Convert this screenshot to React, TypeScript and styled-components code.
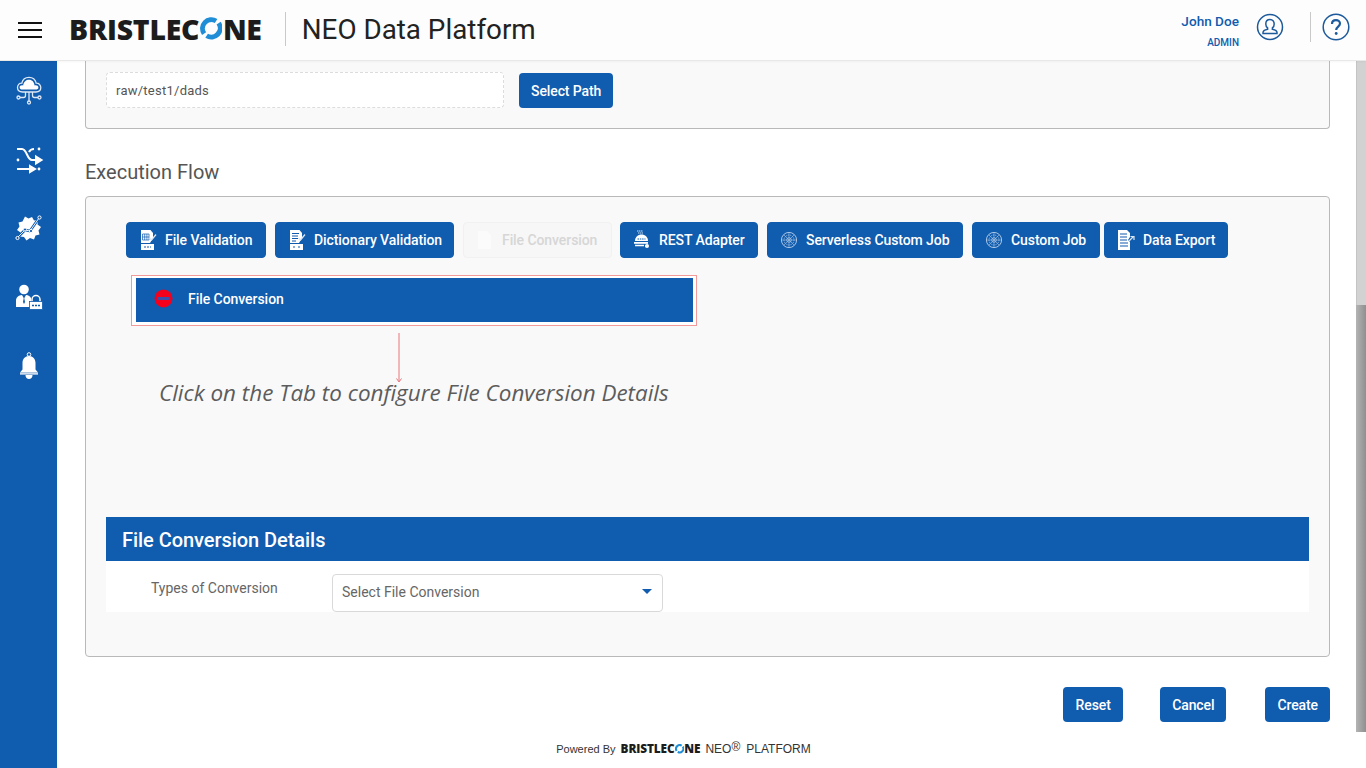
import React from 'react'
import styled, { createGlobalStyle } from 'styled-components'

const BLUE = '#105cae'

const GlobalStyle = createGlobalStyle`
  html, body {
    margin: 0;
    height: 100%;
    overflow: hidden;
    background: #fff;
    font-family: Roboto, "Liberation Sans", sans-serif;
  }
  * { box-sizing: border-box; }
`

const Page = styled.div`
  display: flex;
  flex-direction: column;
  width: 1366px;
  height: 768px;
`

const Header = styled.header`
  display: flex;
  align-items: center;
  flex: none;
  height: 61px;
  padding: 0 16px 6px 18px;
  background: #fdfdfd;
  border-bottom: 1px solid #e8e8e8;
  box-shadow: 0 1px 2px rgba(0, 0, 0, 0.04);
  z-index: 1;
`

const Burger = styled.div`
  display: flex;
  flex-direction: column;
  gap: 5px;
  width: 24px;
  margin: 6px 27px 0 0;
  span {
    height: 2px;
    background: #111;
  }
`

const HeaderLogo = styled.div`
  margin-top: 4px;
`

const LogoMark = styled.span<{ $size: number; $track: number }>`
  display: inline-flex;
  align-items: center;
  font-family: "Open Sans", sans-serif;
  font-weight: 800;
  font-size: ${(p) => p.$size}px;
  letter-spacing: ${(p) => p.$track}px;
  line-height: 1;
  color: #1c1c1c;
  svg {
    width: 0.8em;
    height: 0.8em;
    margin: 0 0.015em;
  }
`

const TitleGroup = styled.div`
  display: flex;
  align-items: center;
  height: 34px;
  margin: 4px 0 0 23px;
  padding-left: 16px;
  border-left: 1px solid #c9c9c9;
  font-size: 27.8px;
  color: #222;
`

const UserBlock = styled.div`
  margin-left: auto;
  margin-top: 6px;
  text-align: right;
  color: ${BLUE};
  font-weight: 500;
  strong {
    display: block;
    font-size: 13.6px;
    font-weight: 500;
    line-height: 20px;
  }
  small {
    display: block;
    margin-top: 6px;
    font-size: 10px;
    line-height: 12px;
  }
`

const UserIcon = styled.svg`
  width: 28px;
  height: 28px;
  margin: 0 26px 0 17px;
  flex: none;
`

const HelpGroup = styled.div`
  display: flex;
  align-items: center;
  height: 30px;
  padding-left: 11px;
  border-left: 1px solid #c9c9c9;
  svg {
    width: 28px;
    height: 28px;
  }
`

const Body = styled.div`
  display: flex;
  flex: 1;
  min-height: 0;
`

const Sidebar = styled.nav`
  display: flex;
  flex-direction: column;
  align-items: center;
  gap: 39px;
  flex: none;
  width: 57px;
  padding-top: 14px;
  background: ${BLUE};
  svg {
    width: 30px;
    height: 30px;
  }
`

const Main = styled.main`
  flex: 1;
  display: flex;
  flex-direction: column;
  padding: 0 26px 0 28px;
`

const PathPanel = styled.section`
  display: flex;
  align-items: flex-start;
  gap: 15px;
  height: 68px;
  padding: 11px 20px 0;
  background: #f9f9f9;
  border: 1px solid #b9b9b9;
  border-top: 0;
  border-radius: 0 0 4px 4px;
`

const PathInput = styled.div`
  display: flex;
  align-items: center;
  width: 398px;
  height: 36px;
  padding-left: 9px;
  background: #fff;
  border: 1px dashed #dcdcdc;
  border-radius: 4px;
  font-size: 13px;
  letter-spacing: 0.25px;
  color: #555;
`

const Action = styled.button`
  display: block;
  height: 35px;
  margin-top: 1px;
  padding: 0 12px;
  background: ${BLUE};
  border: 0;
  border-radius: 4px;
  font-family: inherit;
  font-size: 14px;
  font-weight: 500;
  letter-spacing: -0.1px;
  color: #fff;
`

const SectionTitle = styled.h2`
  margin: 30px 0 11px;
  font-size: 20px;
  font-weight: 400;
  line-height: 26px;
  color: #555;
`

const FlowPanel = styled.section`
  height: 461px;
  padding: 25px 20px 0;
  background: #f9f9f9;
  border: 1px solid #b9b9b9;
  border-radius: 4px;
`

const TabRow = styled.div`
  display: flex;
  padding-left: 20px;
`

const Tab = styled.div<{ $width: number; $gap: number; $off?: boolean }>`
  display: flex;
  align-items: center;
  gap: 8px;
  flex: none;
  width: ${(p) => p.$width}px;
  height: 36px;
  margin-right: ${(p) => p.$gap}px;
  padding-left: 12px;
  background: ${(p) => (p.$off ? '#f7f7f7' : BLUE)};
  border: 1px solid ${(p) => (p.$off ? '#f1f1f1' : BLUE)};
  border-radius: 4px;
  font-size: 14px;
  font-weight: 500;
  letter-spacing: -0.08px;
  color: ${(p) => (p.$off ? '#d6d6d6' : '#fff')};
  white-space: nowrap;
  svg {
    width: 18px;
    height: 20px;
    flex: none;
  }
`

const ActiveFrame = styled.div`
  width: 566px;
  height: 51px;
  margin: 17px 0 0 25px;
  padding: 2px 3px 3px 4px;
  background: #fff;
  border: 1px solid #f39a9a;
`

const ActiveTab = styled.div`
  display: flex;
  align-items: center;
  gap: 15px;
  height: 100%;
  padding: 0 0 3px 18px;
  background: ${BLUE};
  font-size: 14px;
  font-weight: 500;
  letter-spacing: -0.05px;
  color: #fff;
  svg {
    width: 19px;
    height: 19px;
  }
`

const Pointer = styled.svg`
  display: block;
  width: 10px;
  height: 50px;
  margin: 7px 0 0 288px;
`

const Hint = styled.p`
  margin: -5px 0 0 53px;
  font-family: "Open Sans", sans-serif;
  font-style: italic;
  font-size: 22.45px;
  line-height: 30px;
  color: #5c5c5c;
`

const DetailsHead = styled.h3`
  display: flex;
  align-items: center;
  height: 44px;
  margin: 109px 0 0;
  padding: 2px 0 0 16px;
  background: ${BLUE};
  font-size: 20px;
  font-weight: 500;
  letter-spacing: -0.05px;
  color: #fff;
`

const DetailsBody = styled.div`
  display: flex;
  align-items: flex-start;
  height: 51px;
  padding-top: 13px;
  background: #fff;
`

const FieldLabel = styled.label`
  width: 226px;
  padding: 6px 0 0 45px;
  font-size: 14px;
  line-height: 16px;
  color: #666;
`

const SelectBox = styled.div`
  display: flex;
  align-items: center;
  justify-content: space-between;
  width: 331px;
  height: 38px;
  padding: 0 10px 3px 9px;
  background: #fff;
  border: 1px solid #d9d9d9;
  border-radius: 4px;
  font-size: 14px;
  color: #666;
  &::after {
    content: '';
    border-style: solid;
    border-width: 5px 5.5px 0;
    border-color: ${BLUE} transparent transparent;
  }
`

const ActionRow = styled.div`
  display: flex;
  justify-content: flex-end;
  gap: 37px;
  margin-top: 30px;
  button {
    min-width: 60px;
    margin-top: 0;
  }
  button:last-child {
    margin-left: 2px;
  }
`

const Footer = styled.footer`
  display: flex;
  align-items: center;
  justify-content: center;
  margin-top: 20px;
  padding-right: 48px;
  font-family: "Liberation Sans", sans-serif;
  font-size: 12px;
  color: #333;
  b {
    font-weight: 400;
    font-size: 11px;
    margin-right: 5px;
  }
  sup {
    font-size: 12px;
    line-height: 0;
    margin-right: 6px;
    position: relative;
    top: -2px;
    vertical-align: super;
  }
`

const FooterNeo = styled.span`
  margin-left: 5px;
`

const Scrollbar = styled.div`
  display: flex;
  flex-direction: column;
  flex: none;
  width: 10px;
  height: 671px;
  background: #d2d2d2;
  border-left: 1px solid #c4c4c4;
  &::after {
    content: '';
    display: block;
    height: 427px;
    margin: 244px 0 0 -1px;
    background: linear-gradient(90deg, #b4b4b4, #8f8f8f);
  }
`

const ConeO = () => (
  <svg viewBox="0 0 24 24" fill="none" stroke="#1f8ed6" strokeWidth="5.2">
    <path d="M17 4.2A9.4 9.4 0 0 0 4.3 17.5" />
    <path d="M7 19.8A9.4 9.4 0 0 0 19.7 6.5" />
  </svg>
)

const Logo = ({ size, track }: { size: number; track: number }) => (
  <LogoMark $size={size} $track={track}>
    BRISTLEC
    <ConeO />
    NE
  </LogoMark>
)

const CloudIcon = () => (
  <svg viewBox="0 0 30 30" fill="none" stroke="#dfe9f5" strokeWidth="1.3">
    <path d="M8.500 17c-3.200 0-5-2-5-4.400S5.200 8 7.800 8.200C8.700 4.400 11.700 2.400 15 2.400c3.800 0 6.400 2.600 7.200 5.800 2.800-.2 4.600 2 4.600 4.400S25.200 17 22 17z" />
    <path d="M8.500 14.500c-1.800 0-2.900-.9-2.900-2.300S7 10 9.200 10.400C9.700 6.800 12.200 4.800 15 4.800c3.200 0 5.200 2.400 5.600 5.600 2.200-.4 3.800.6 3.800 2S23.400 14.500 21.600 14.500z" fill="#fff" stroke="none" />
    <path d="M15 17v9M11.500 17v3.500a2 2 0 0 1-2 2H6M18.500 17v3.500a2 2 0 0 0 2 2H24" />
    <circle cx="4.500" cy="22.500" r="1.500" />
    <circle cx="25.500" cy="22.500" r="1.500" />
    <circle cx="15" cy="27.500" r="1.500" />
  </svg>
)

const ShuffleIcon = () => (
  <svg viewBox="0 0 30 30" fill="none" stroke="#fff" strokeWidth="2">
    <path d="M3 5h5c5 0 5 11 10 11h5" />
    <path d="M22 12.500l5.500 3.500-5.500 3.500z" fill="#fff" />
    <path d="M3 25h14" />
    <path d="M16 22l5 3-5 3z" fill="#fff" />
    <path d="M15 8c1-2 2-3 5-3" />
    <circle cx="25" cy="5" r="1.400" fill="#fff" stroke="none" />
    <circle cx="25" cy="25" r="1.400" fill="#fff" stroke="none" />
    <circle cx="4" cy="16" r="1.400" fill="#fff" stroke="none" />
  </svg>
)

const GearIcon = () => (
  <svg viewBox="0 0 30 30">
    <path
      fill="#fff"
      d="M11 3.500l3.500 2 3.500-1.500 2 3.500 4-.500-.5 4.500 3.500 2.500-2.500 3.500 1 4-4 1-1.500 4-4-1.500-3.500 2.500-2.500-3.500-4-.5.500-4-3.500-2.500 2.500-3.500-1-4 4-1z"
    />
    <path d="M3 25l8-8 5 1 9-13" fill="none" stroke={BLUE} strokeWidth="2.600" />
    <path d="M3.500 24.500l7.500-7.500 5 1 9-13" fill="none" stroke="#fff" strokeWidth="0.900" />
    <circle cx="3.500" cy="25" r="1.600" fill={BLUE} stroke="#fff" />
    <circle cx="11" cy="16.500" r="1.600" fill={BLUE} stroke="#fff" />
    <circle cx="17" cy="18" r="1.600" fill={BLUE} stroke="#fff" />
    <circle cx="25.500" cy="4.500" r="1.600" fill={BLUE} stroke="#fff" />
  </svg>
)

const UserLockIcon = () => (
  <svg viewBox="0 0 30 30">
    <circle cx="10" cy="7.500" r="4.800" fill="#fff" />
    <path fill="#fff" d="M2 25v-6c0-4 2.500-5.500 6-6l2 3.500 2-3.500c2.500.3 4 1.100 5 3v9z" />
    <path d="M10 15l-1 5 1 2 1-2z" fill={BLUE} />
    <path d="M18 20v-2.500a4 4 0 0 1 8 0V20" fill="none" stroke="#fff" strokeWidth="1.500" />
    <rect x="15.500" y="19.500" width="13" height="8" fill="#fff" stroke={BLUE} strokeWidth="0.800" />
    <path d="M18 23.500h8" stroke={BLUE} strokeWidth="1.500" strokeDasharray="2 1" />
  </svg>
)

const BellIcon = () => (
  <svg viewBox="0 0 30 30">
    <circle cx="15" cy="3.500" r="1.800" fill="none" stroke="#fff" strokeWidth="1" />
    <path fill="#fff" d="M15 5c-4 0-6.500 3-6.500 7v6.500L6 21.500h18l-2.500-3V12c0-4-2.500-7-6.500-7z" />
    <rect x="6" y="21.500" width="18" height="2.200" fill="#cfdcec" />
    <path fill="#fff" d="M11.500 24h7c0 2.500-1.500 4-3.500 4s-3.500-1.500-3.500-4z" />
  </svg>
)

const SheetIcon = ({ tag, rows }: { tag: string; rows?: boolean }) => (
  <svg viewBox="0 0 18 20">
    <path fill="#fff" d="M2 0h9.500L14 3v5l-3 5H2z" />
    {rows ? (
      <path d="M4 3.500h7M4 6h6M4 8.500h6M4 11h4" stroke={BLUE} strokeWidth="1" />
    ) : (
      <path d="M3.500 4h6.500v6H3.500zM3.500 7h6.500M5.700 4v6M7.900 4v6" fill="none" stroke={BLUE} strokeWidth="0.700" />
    )}
    <path d="M10.500 8l2 2 4.500-5.500" fill="none" stroke="#dce7f3" strokeWidth="1.300" />
    <rect x="2" y="14" width="13" height="6" fill="#fff" />
    <path d={tag} stroke={BLUE} strokeWidth="1" />
  </svg>
)

const RestIcon = () => (
  <svg viewBox="0 0 18 20">
    <path d="M4 1h6M5 3h5" stroke="#cfe0f2" strokeWidth="1" strokeDasharray="1.500 .5" />
    <path fill="#fff" d="M2 11c0-4 3-6.500 6.500-6.500S15 7 15 11z" />
    <path d="M4.500 9h8" stroke={BLUE} strokeWidth="1" strokeDasharray="1.500 .8" />
    <rect x="1" y="12" width="14" height="1.800" fill="#fff" />
    <path d="M2 15.500h9M12 16h3" stroke="#fff" strokeWidth="1.400" />
    <circle cx="14" cy="16" r="2" fill="#fff" />
  </svg>
)

const WheelIcon = () => (
  <svg viewBox="0 0 18 20" fill="none" stroke="#a9c6e6">
    <circle cx="9" cy="10" r="7.600" strokeWidth="1" />
    <circle cx="9" cy="10" r="5" strokeWidth="0.800" strokeDasharray="1.200 .8" />
    <circle cx="9" cy="10" r="2.300" strokeWidth="0.800" />
    <path d="M9 2.500v15M1.500 10h15M3.700 4.700l10.600 10.600M14.300 4.700L3.700 15.300" strokeWidth="0.600" />
  </svg>
)

const ExportIcon = () => (
  <svg viewBox="0 0 18 20">
    <path fill="#fff" d="M1 0h9l3 3v4l-2 3 2 2v8H1z" />
    <path d="M3 4h7M3 7h7M3 10h7M3 13h8M3 16h8" stroke={BLUE} strokeWidth="1.100" />
    <path d="M12 11l4-4M13.500 6.500H17V10" fill="none" stroke="#dce7f3" strokeWidth="1.200" />
  </svg>
)

const BlankIcon = () => (
  <svg viewBox="0 0 18 20">
    <path fill="#fbfbfb" d="M2 1h9l4 4v14H2z" />
  </svg>
)

const tabs = [
  { label: 'File Validation', width: 140, gap: 9, icon: <SheetIcon tag="M5 17h2M8 17h2M11 17h1" /> },
  { label: 'Dictionary Validation', width: 179, gap: 9, icon: <SheetIcon rows tag="M5 17h2M10 17h2" /> },
  { label: 'File Conversion', width: 149, gap: 8, off: true, icon: <BlankIcon /> },
  { label: 'REST Adapter', width: 138, gap: 9, icon: <RestIcon /> },
  { label: 'Serverless Custom Job', width: 196, gap: 9, icon: <WheelIcon /> },
  { label: 'Custom Job', width: 128, gap: 4, icon: <WheelIcon /> },
  { label: 'Data Export', width: 124, gap: 0, icon: <ExportIcon /> },
]

export default function App() {
  return (
    <Page>
      <GlobalStyle />
      <Header>
        <Burger>
          <span />
          <span />
          <span />
        </Burger>
        <HeaderLogo>
          <Logo size={28.4} track={-0.2} />
        </HeaderLogo>
        <TitleGroup>NEO Data Platform</TitleGroup>
        <UserBlock>
          <strong>John Doe</strong>
          <small>ADMIN</small>
        </UserBlock>
        <UserIcon viewBox="0 0 28 28" fill="none" stroke="#1c5a9c" strokeWidth="1.500">
          <circle cx="14" cy="14" r="12.500" />
          <path d="M14 6.500c-2.600 0-4.200 2-4.200 4.400 0 1.800.8 3.200 1.800 4v1.400c-2.600.6-4.600 1.400-4.600 3.200v1h14v-1c0-1.800-2-2.600-4.600-3.200v-1.400c1-.8 1.800-2.200 1.800-4 0-2.400-1.600-4.400-4.200-4.400z" />
        </UserIcon>
        <HelpGroup>
          <svg viewBox="0 0 28 28" fill="none" stroke="#1c5a9c">
            <circle cx="14" cy="14" r="12.800" strokeWidth="1.500" />
            <path d="M10 11c0-2.400 1.800-3.800 4-3.800s4 1.400 4 3.400c0 3-3.800 3-3.800 6.400" strokeWidth="2.200" />
            <circle cx="14.200" cy="20.500" r="1.400" fill="#1c5a9c" stroke="none" />
          </svg>
        </HelpGroup>
      </Header>
      <Body>
        <Sidebar>
          <CloudIcon />
          <ShuffleIcon />
          <GearIcon />
          <UserLockIcon />
          <BellIcon />
        </Sidebar>
        <Main>
          <PathPanel>
            <PathInput>raw/test1/dads</PathInput>
            <Action>Select Path</Action>
          </PathPanel>
          <SectionTitle>Execution Flow</SectionTitle>
          <FlowPanel>
            <TabRow>
              {tabs.map((t) => (
                <Tab key={t.label} $width={t.width} $gap={t.gap} $off={t.off}>
                  {t.icon}
                  {t.label}
                </Tab>
              ))}
            </TabRow>
            <ActiveFrame>
              <ActiveTab>
                <svg viewBox="0 0 19 19">
                  <circle cx="9.500" cy="9.500" r="9" fill="#f4001c" />
                  <rect x="3.500" y="8" width="12" height="3" fill="#3d4fa8" />
                </svg>
                File Conversion
              </ActiveTab>
            </ActiveFrame>
            <Pointer viewBox="0 0 10 50" fill="none" stroke="#e8747c">
              <path d="M5 0v48M2.500 45.500L5 49l2.500-3.500" />
            </Pointer>
            <Hint>Click on the Tab to configure File Conversion Details</Hint>
            <DetailsHead>File Conversion Details</DetailsHead>
            <DetailsBody>
              <FieldLabel>Types of Conversion</FieldLabel>
              <SelectBox>Select File Conversion</SelectBox>
            </DetailsBody>
          </FlowPanel>
          <ActionRow>
            <Action>Reset</Action>
            <Action>Cancel</Action>
            <Action>Create</Action>
          </ActionRow>
          <Footer>
            <b>Powered By</b>
            <Logo size={11.800} track={-0.1} />
            <FooterNeo>NEO</FooterNeo>
            <sup>®</sup>
            PLATFORM
          </Footer>
        </Main>
        <Scrollbar />
      </Body>
    </Page>
  )
}
